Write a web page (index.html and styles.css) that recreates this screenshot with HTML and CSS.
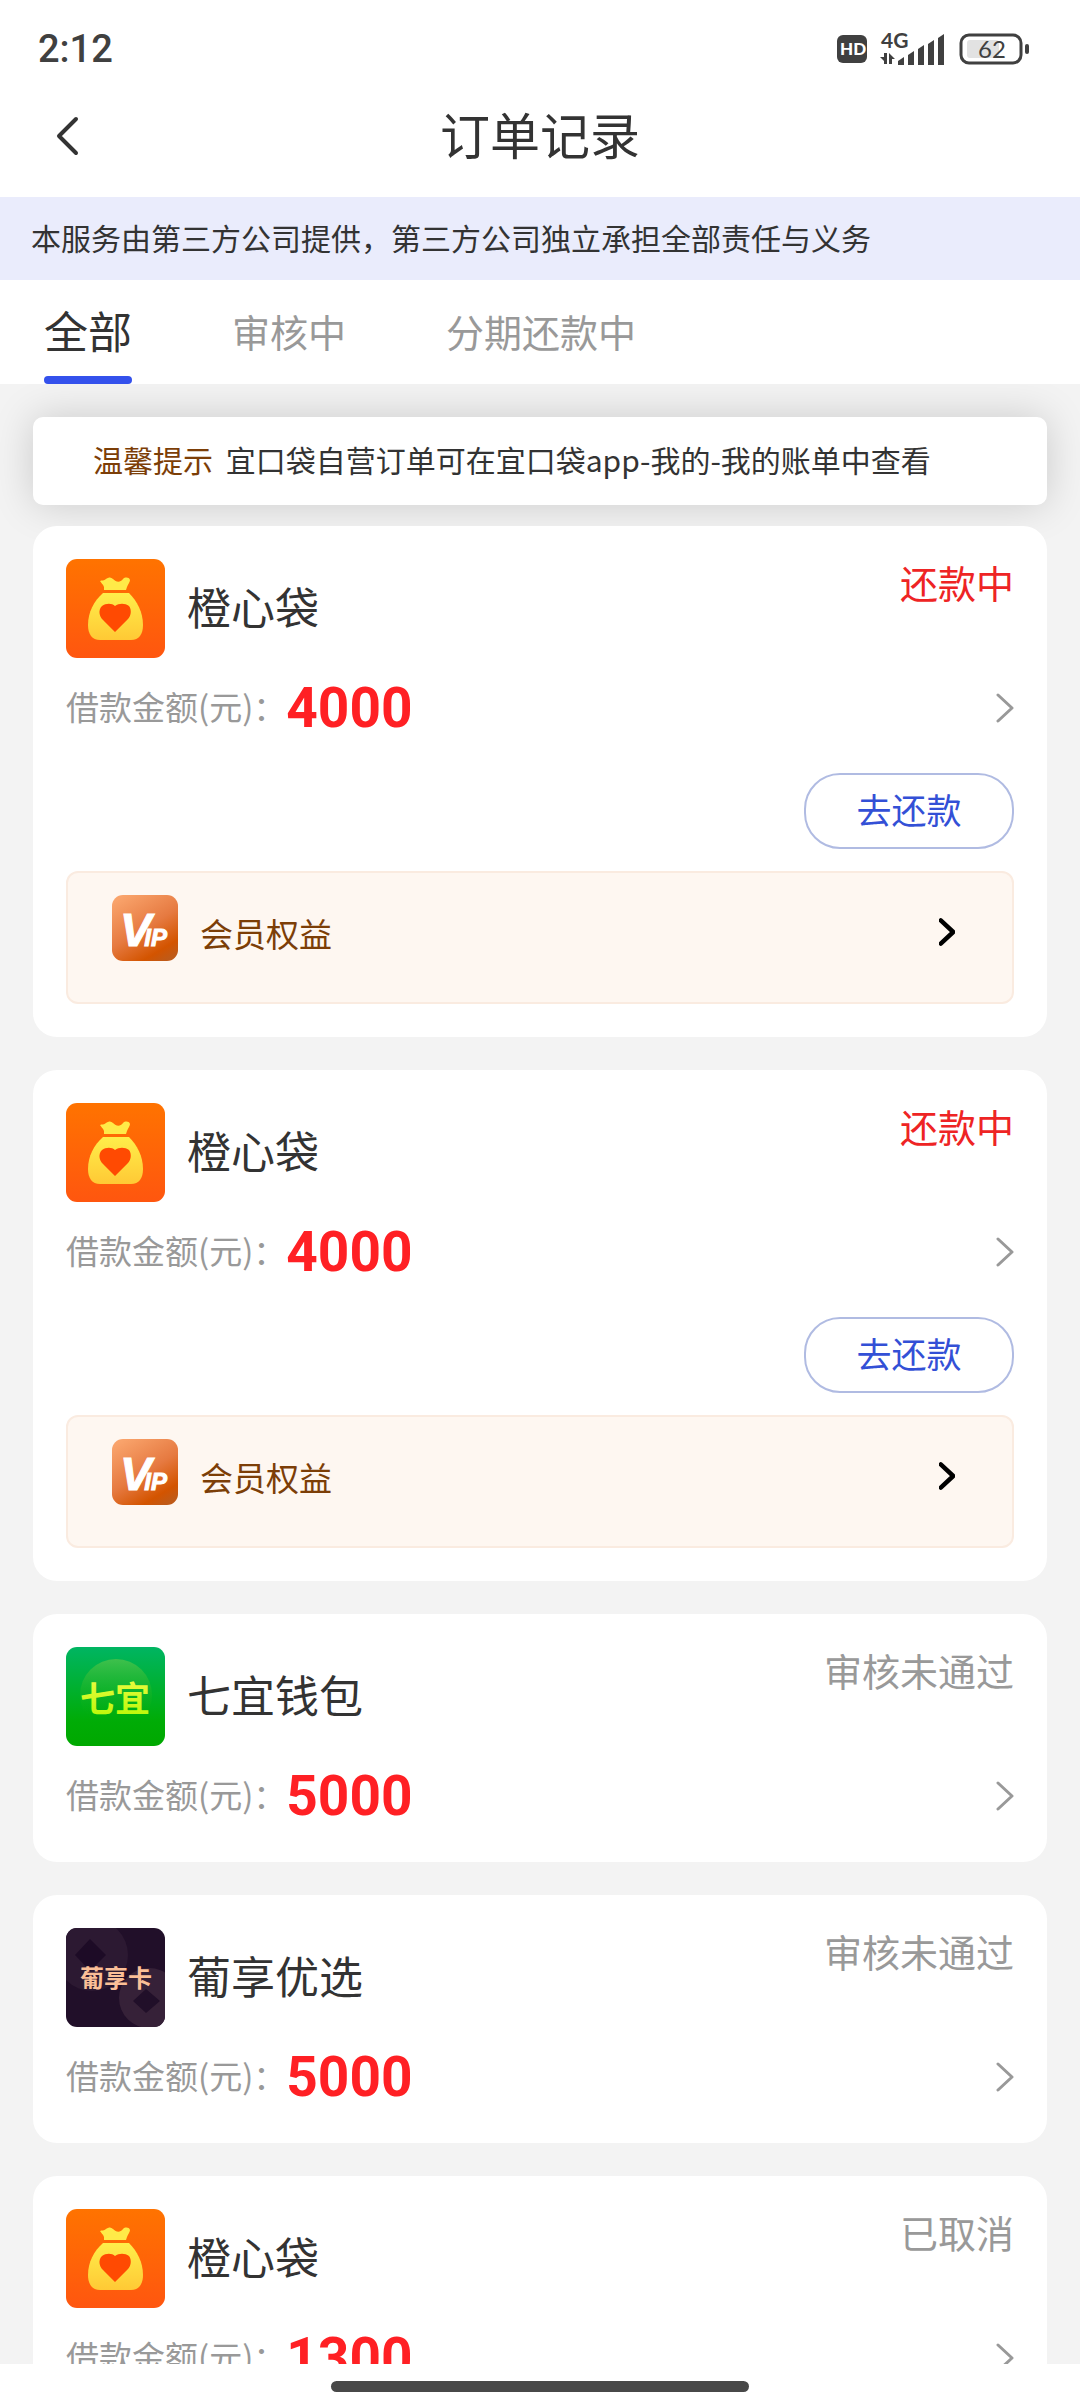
FILE: index.html
```html
<!DOCTYPE html>
<html lang="zh-CN">

<head>
    <meta charset="UTF-8">
    <meta name="viewport" content="width=device-width, initial-scale=1.0">
    <title>订单记录</title>
    <link rel="stylesheet" href="styles.css">
</head>

<body>
    <!-- 公用图标 -->
    <svg class="sprite" aria-hidden="true">
        <defs>
            <linearGradient id="orange" x1="0" y1="0" x2="0" y2="1">
                <stop offset="0" stop-color="#ff7300" />
                <stop offset="1" stop-color="#ff560f" />
            </linearGradient>
            <linearGradient id="gold" x1="0" y1="0" x2="0" y2="1">
                <stop offset="0" stop-color="#ffee4a" />
                <stop offset="1" stop-color="#ffc935" />
            </linearGradient>
            <linearGradient id="green" x1="0" y1="0" x2="0" y2="1">
                <stop offset="0" stop-color="#00b562" />
                <stop offset="0.75" stop-color="#00ac06" />
                <stop offset="1" stop-color="#00a800" />
            </linearGradient>
            <linearGradient id="glow" x1="0" y1="0" x2="0" y2="1">
                <stop offset="0" stop-color="#3fc04c" />
                <stop offset="0.8" stop-color="#0cae0c" stop-opacity="0" />
            </linearGradient>
            <linearGradient id="lime" x1="0" y1="0" x2="0" y2="1">
                <stop offset="0" stop-color="#f4fb4c" />
                <stop offset="1" stop-color="#b4f800" />
            </linearGradient>
            <linearGradient id="copper" x1="0.2" y1="0" x2="0.8" y2="1">
                <stop offset="0" stop-color="#f9a36b" />
                <stop offset="0.5" stop-color="#e67a41" />
                <stop offset="0.85" stop-color="#d35400" />
                <stop offset="1" stop-color="#bf5a18" />
            </linearGradient>
        </defs>
        <symbol id="bag" viewBox="0 0 99 99">
            <rect width="99" height="99" fill="url(#orange)" />
            <path d="M38 31 L38 28 C37 25 35 24 34 22 C36 21 38 22 40 20 C43 18 45 18 47 20 C50 23 54 24 57 20 C59 18 63 18 64 21 C64 23 62 25 61 28 L60 31 Z" fill="#ffea48" />
            <path d="M37 34 H63 C71 42 77 53 77 66 C77 75 73 81 65 81 H34 C26 81 22 75 22 66 C22 53 28 42 37 34 Z" fill="url(#gold)" />
            <path d="M49 73 L37 61 C33 57 32 51 36 47 C40 44 46 44 49 47 C53 44 59 44 63 47 C66 51 65 57 62 60 Z" fill="#ff4a02" />
        </symbol>
        <symbol id="right" viewBox="0 0 18 30">
            <path d="M2 2 L16 15 L2 28" />
        </symbol>
    </svg>

    <div class="page">
        <div class="statusBar">
            <span class="time">2:12</span>
            <svg class="signal" viewBox="836 30 194 38">
                <rect x="837" y="35" width="30" height="28" rx="6" />
                <text class="hd" x="840" y="55">HD</text>
                <text class="net" x="881" y="48">4G</text>
                <path d="M884 53 h3 v11 h-3 v-3 l-4 -4 h4 z M889 64 v-11 l6 6 h-3 v5 z" />
                <path d="M898 65 v-4 l6 -4 v8 z M908 65 v-10 l6 -4 v14 z M918 65 v-16 l6 -4 v20 z M928 65 v-21 l6 -4 v25 z M938 65 v-27 l6 -4 v31 z" />
                <rect class="shell" x="961" y="35" width="60" height="28" rx="8" />
                <rect class="level" x="967" y="40" width="32" height="18" rx="3" />
                <rect x="1025" y="44" width="4" height="10" rx="2" />
                <text class="power" x="978" y="58">62</text>
            </svg>
        </div>

        <header class="header">
            <button type="button" class="back" aria-label="返回">
                <svg viewBox="0 0 24 40">
                    <path d="M21 3 L4 20 L21 37" />
                </svg>
            </button>
            <h1 class="title">订单记录</h1>
        </header>

        <p class="notice">本服务由第三方公司提供，第三方公司独立承担全部责任与义务</p>

        <nav class="tabs">
            <button type="button" class="tab active">全部</button>
            <button type="button" class="tab">审核中</button>
            <button type="button" class="tab">分期还款中</button>
        </nav>

        <main class="content">
            <p class="tip"><span class="tipName">温馨提示</span> 宜口袋自营订单可在宜口袋app-我的-我的账单中查看</p>

            <ul class="orderList">
                <li class="order">
                    <div class="orderHead">
                        <svg class="logo"><use href="#bag" /></svg>
                        <h2 class="name">橙心袋</h2>
                        <span class="state doing">还款中</span>
                    </div>
                    <a class="amount" href="#">
                        <span class="label">借款金额(元)：</span>
                        <b class="num">4000</b>
                        <svg class="arrow"><use href="#right" /></svg>
                    </a>
                    <button type="button" class="repay">去还款</button>
                    <a class="vip" href="#">
                        <svg class="vipIcon" viewBox="0 0 66 66">
                            <rect width="66" height="66" fill="url(#copper)" />
                            <text class="vipText" x="8" y="51"><tspan font-size="47">V</tspan><tspan font-size="24" dx="-7">IP</tspan></text>
                        </svg>
                        <span class="vipName">会员权益</span>
                        <svg class="vipArrow"><use href="#right" /></svg>
                    </a>
                </li>
                <li class="order">
                    <div class="orderHead">
                        <svg class="logo"><use href="#bag" /></svg>
                        <h2 class="name">橙心袋</h2>
                        <span class="state doing">还款中</span>
                    </div>
                    <a class="amount" href="#">
                        <span class="label">借款金额(元)：</span>
                        <b class="num">4000</b>
                        <svg class="arrow"><use href="#right" /></svg>
                    </a>
                    <button type="button" class="repay">去还款</button>
                    <a class="vip" href="#">
                        <svg class="vipIcon" viewBox="0 0 66 66">
                            <rect width="66" height="66" fill="url(#copper)" />
                            <text class="vipText" x="8" y="51"><tspan font-size="47">V</tspan><tspan font-size="24" dx="-7">IP</tspan></text>
                        </svg>
                        <span class="vipName">会员权益</span>
                        <svg class="vipArrow"><use href="#right" /></svg>
                    </a>
                </li>
                <li class="order">
                    <div class="orderHead">
                        <svg class="logo" viewBox="0 0 99 99">
                            <rect width="99" height="99" fill="url(#green)" />
                            <circle cx="50" cy="48" r="36" fill="url(#glow)" />
                            <text class="logoText" x="14" y="65" font-size="35" fill="url(#lime)">七宜</text>
                        </svg>
                        <h2 class="name">七宜钱包</h2>
                        <span class="state">审核未通过</span>
                    </div>
                    <a class="amount" href="#">
                        <span class="label">借款金额(元)：</span>
                        <b class="num">5000</b>
                        <svg class="arrow"><use href="#right" /></svg>
                    </a>
                </li>
                <li class="order">
                    <div class="orderHead">
                        <svg class="logo" viewBox="0 0 99 99">
                            <rect width="99" height="99" fill="#210f29" />
                            <circle cx="26" cy="27" r="36" fill="#2c1932" />
                            <path d="M24 11 L40 27 L24 43 L9 27 Z" fill="#1d0b26" />
                            <circle cx="83" cy="70" r="30" fill="#362138" />
                            <path d="M80 61 L94 73 L80 85 L67 73 Z" fill="#210f29" />
                            <text class="logoText" x="14" y="59" font-size="24" fill="#fbbf97">葡享卡</text>
                        </svg>
                        <h2 class="name">葡享优选</h2>
                        <span class="state">审核未通过</span>
                    </div>
                    <a class="amount" href="#">
                        <span class="label">借款金额(元)：</span>
                        <b class="num">5000</b>
                        <svg class="arrow"><use href="#right" /></svg>
                    </a>
                </li>
                <li class="order">
                    <div class="orderHead">
                        <svg class="logo"><use href="#bag" /></svg>
                        <h2 class="name">橙心袋</h2>
                        <span class="state">已取消</span>
                    </div>
                    <a class="amount" href="#">
                        <span class="label">借款金额(元)：</span>
                        <b class="num">1300</b>
                        <svg class="arrow"><use href="#right" /></svg>
                    </a>
                </li>
            </ul>
        </main>

        <div class="homeBar"><i class="handle"></i></div>
    </div>
</body>

</html>
```

FILE: styles.css
```css
* {
    margin: 0;
    padding: 0;
    box-sizing: border-box;
}

body {
    font-family: "Noto Sans CJK SC", sans-serif;
    color: #333;
    background-color: #fff;
}

button {
    font-family: inherit;
    background: none;
    border: none;
}

a {
    color: inherit;
    text-decoration: none;
}

svg {
    display: block;
    flex-shrink: 0;
}

.sprite {
    position: absolute;
    width: 0;
    height: 0;
}

.page {
    display: flex;
    flex-direction: column;
    height: 100vh;
}

/* 状态栏 */
.statusBar {
    display: flex;
    align-items: center;
    justify-content: space-between;
    height: 75px;
    padding: 22px 50px 0 38px;
}

.time {
    font-family: Roboto, sans-serif;
    font-size: 38px;
    line-height: 52px;
    font-weight: 500;
    color: #404040;
}

.signal {
    width: 194px;
    height: 38px;
    fill: #404040;
    font-family: Lato, sans-serif;
}

.hd {
    font-size: 17px;
    font-weight: 900;
    fill: #fff;
}

.net {
    font-size: 21px;
    font-weight: 700;
}

.power {
    font-size: 24px;
}

.shell {
    fill: none;
    stroke: #404040;
    stroke-width: 3;
}

.level {
    fill: #e2e2e2;
}

/* 标题 */
.header {
    display: grid;
    grid-template-columns: 110px 1fr 110px;
    align-items: center;
    height: 122px;
}

.back {
    display: flex;
    padding-left: 55px;
}

.back svg {
    width: 24px;
    height: 40px;
    fill: none;
    stroke: #333;
    stroke-width: 4;
    stroke-linecap: round;
    stroke-linejoin: round;
}

.title {
    padding-bottom: 6px;
    font-size: 50px;
    line-height: 72px;
    font-weight: 400;
    text-align: center;
}

.notice {
    padding: 18px 31px 21px;
    font-size: 30px;
    line-height: 44px;
    background-color: #eaecfc;
}

/* 选项卡 */
.tabs {
    display: flex;
    gap: 100px;
    height: 104px;
    padding: 0 44px;
}

.tab {
    padding-bottom: 4px;
    font-size: 38px;
    color: #999;
}

.tab.active {
    position: relative;
    font-size: 44px;
    color: #333;
}

.tab.active::after {
    content: '';
    position: absolute;
    left: 0;
    bottom: 0;
    width: 100%;
    height: 8px;
    border-radius: 4px;
    background-color: #3451ec;
}

.content {
    flex: 1;
    min-height: 0;
    padding: 33px 33px 0;
    overflow: hidden;
    background-color: #f3f3f3;
}

.tip {
    padding: 20px 60px 24px;
    margin-bottom: 21px;
    font-size: 30px;
    line-height: 44px;
    border-radius: 10px;
    background-color: #fff;
    box-shadow: 0 0 40px rgba(0, 0, 0, 0.17);
}

.tipName {
    margin-right: 6px;
    color: #7c3e07;
}

/* 订单列表 */
.orderList {
    position: relative;
    list-style: none;
}

.order {
    display: flex;
    flex-direction: column;
    padding: 33px;
    margin-bottom: 33px;
    border-radius: 24px;
    background-color: #fff;
}

.orderHead {
    display: flex;
    align-items: center;
    gap: 22px;
}

.logo {
    width: 99px;
    height: 99px;
    border-radius: 11px;
}

.logoText {
    font-weight: 700;
}

.name {
    flex: 1;
    padding-bottom: 6px;
    font-size: 44px;
    line-height: 60px;
    font-weight: 400;
}

.state {
    align-self: flex-start;
    font-size: 38px;
    line-height: 46px;
    color: #999;
}

.state.doing {
    color: #ee2424;
}

.amount {
    display: flex;
    align-items: center;
    height: 66px;
    margin-top: 17px;
}

.label {
    padding-bottom: 4px;
    font-size: 33px;
    color: #999;
}

.num {
    flex: 1;
    font-family: Roboto, sans-serif;
    font-size: 55px;
    font-weight: 700;
    color: #ff2024;
}

.arrow {
    width: 18px;
    height: 30px;
    fill: none;
    stroke: #999;
    stroke-width: 3;
    stroke-linecap: round;
    stroke-linejoin: round;
}

.repay {
    align-self: flex-end;
    width: 210px;
    height: 76px;
    padding-bottom: 6px;
    margin-top: 32px;
    font-size: 35px;
    color: #3350d6;
    border: 2px solid #b0bbe2;
    border-radius: 36px;
}

/* 会员权益 */
.vip {
    display: flex;
    align-items: flex-start;
    height: 133px;
    padding: 22px 57px 0 44px;
    margin-top: 22px;
    border: 2px solid #faebe0;
    border-radius: 12px;
    background-color: #fef7f1;
}

.vipIcon {
    width: 66px;
    height: 66px;
    border-radius: 11px;
}

.vipText {
    font-family: "Liberation Sans", sans-serif;
    font-weight: 700;
    font-style: italic;
    fill: #fff;
    stroke: #fff;
    stroke-width: 1;
}

.vipName {
    flex: 1;
    margin-left: 22px;
    font-size: 33px;
    line-height: 76px;
    color: #7c3e07;
}

.vipArrow {
    width: 16px;
    height: 74px;
    fill: none;
    stroke: #000;
    stroke-width: 5;
    stroke-linecap: round;
    stroke-linejoin: round;
}

/* 底部横条 */
.homeBar {
    display: flex;
    align-items: center;
    justify-content: center;
    height: 44px;
}

.handle {
    width: 418px;
    height: 11px;
    border-radius: 6px;
    background-color: #484848;
}
```
